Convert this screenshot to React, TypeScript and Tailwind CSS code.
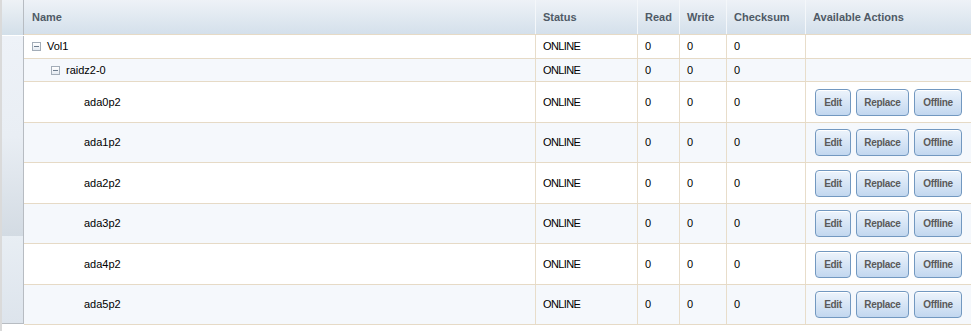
const disks = ["ada0p2", "ada1p2", "ada2p2", "ada3p2", "ada4p2", "ada5p2"];

function MinusBox() {
  return (
    <span className="flex h-[9px] w-[9px] items-center justify-center border border-[#a3adb8] bg-gradient-to-b from-white to-[#e4eaf1]">
      <span className="h-px w-[5px] bg-[#6d7d8e]" />
    </span>
  );
}

function Btn({ label, w }: { label: string; w: string }) {
  return (
    <button
      className={`${w} h-[27px] rounded-[4px] border border-[#7298c0] bg-gradient-to-b from-[#edf4fc] to-[#c2d7ef] text-[10px] font-bold tracking-[-0.3px] text-[#5a5a5a] shadow-[inset_0_1px_0_#ffffff]`}
    >
      {label}
    </button>
  );
}

function Row({
  name,
  indent,
  icon,
  h,
  alt,
  actions,
}: {
  name: string;
  indent: string;
  icon?: boolean;
  h: string;
  alt: boolean;
  actions?: boolean;
}) {
  const cell = "flex items-center border-l border-[#e8ddca] pl-[7px]";
  return (
    <div className={`flex ${h} border-b border-[#e6dac6] ${alt ? "bg-[#f5f8fc]" : "bg-white"}`}>
      <div className={`flex w-[511px] items-center gap-[6px] ${indent}`}>
        {icon && <MinusBox />}
        <span>{name}</span>
      </div>
      <div className={`${cell} w-[102px] tracking-[-0.6px]`}>ONLINE</div>
      <div className={`${cell} w-[42px]`}>0</div>
      <div className={`${cell} w-[47px]`}>0</div>
      <div className={`${cell} w-[79px]`}>0</div>
      <div className={`${cell} flex-1 gap-[5px] pl-[9px]`}>
        {actions && (
          <>
            <Btn label="Edit" w="w-[36px]" />
            <Btn label="Replace" w="w-[53px]" />
            <Btn label="Offline" w="w-[48px]" />
          </>
        )}
      </div>
    </div>
  );
}

export default function App() {
  const head = "flex items-center border-l border-[#f4f7fa] pl-[7px]";
  return (
    <div className="flex h-[331px] w-[971px] bg-white font-['Liberation_Sans',Arial,sans-serif] text-[11px] text-black">
      <div className="w-[2px] bg-[#dadada]" />
      <div className="flex w-[22px] flex-col self-start">
        <div className="h-[35px] border-r border-[#b7bcc2] bg-gradient-to-b from-[#eef2f6] to-[#d3dfe9]" />
        <div className="h-px bg-white" />
        <div className="h-[200px] border-r border-[#b7bcc2] bg-gradient-to-b from-[#eef2f8] via-[#e9eef4] to-[#d3dbe3]" />
        <div className="h-[88px] border-r border-b border-[#b7bcc2] bg-gradient-to-b from-[#e8eef4] to-[#dde4ec]" />
      </div>
      <div className="flex flex-1 flex-col self-start">
        <div className="flex h-[35px] border-b border-[#e6dac6] bg-gradient-to-b from-[#eef2f7] to-[#d4e0eb] font-bold text-[#4f5a66]">
          <div className="flex w-[511px] items-center pl-[8px]">Name</div>
          <div className={`${head} w-[102px]`}>Status</div>
          <div className={`${head} w-[42px]`}>Read</div>
          <div className={`${head} w-[47px]`}>Write</div>
          <div className={`${head} w-[79px]`}>Checksum</div>
          <div className={`${head} flex-1`}>Available Actions</div>
        </div>
        <Row name="Vol1" indent="pl-[8px]" icon h="h-[24px]" alt={false} />
        <Row name="raidz2-0" indent="pl-[27px]" icon h="h-[23px]" alt />
        {disks.map((d, i) => (
          <Row
            key={d}
            name={d}
            indent="pl-[60px]"
            h={i % 2 === 0 ? "h-[41px]" : "h-[40px]"}
            alt={i % 2 === 1}
            actions
          />
        ))}
      </div>
    </div>
  );
}
